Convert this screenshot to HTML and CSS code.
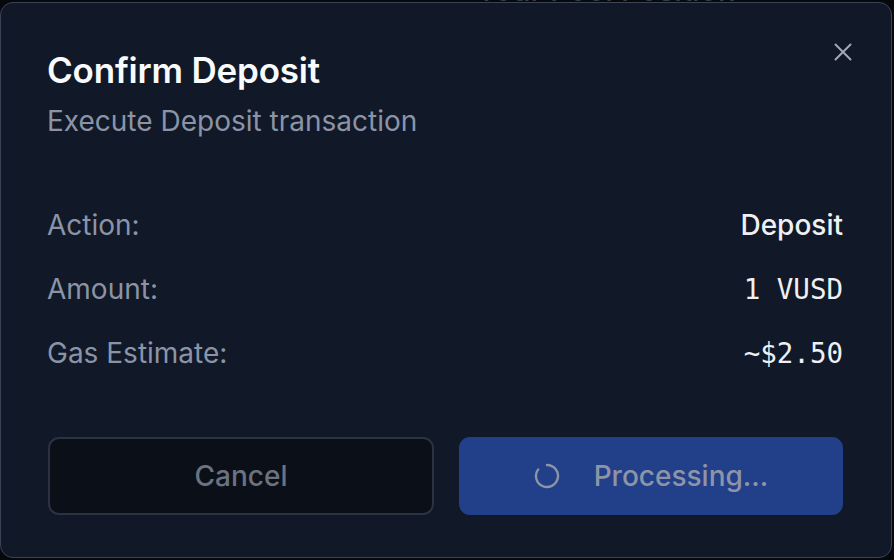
FILE: index.html
```html
<!DOCTYPE html>
<html lang="en">
<head>
<meta charset="utf-8">
<title>Confirm Deposit</title>
<link rel="stylesheet" href="styles.css">
</head>
<body>
<div class="page">
  <div class="page-heading">Your Pool Position</div>
</div>
<div class="dialog" role="dialog">
  <button class="close" aria-label="Close">
    <svg width="18" height="18" viewBox="0 0 18 18"><path d="M1.5 1.5 L16.5 16.5 M16.5 1.5 L1.5 16.5" stroke="currentColor" stroke-width="2" stroke-linecap="round"/></svg>
  </button>
  <div class="header">
    <h2 class="title">Confirm Deposit</h2>
    <p class="subtitle">Execute Deposit transaction</p>
  </div>
  <div class="rows">
    <div class="row"><span class="label">Action:</span><span class="value">Deposit</span></div>
    <div class="row"><span class="label">Amount:</span><span class="value mono">1 VUSD</span></div>
    <div class="row"><span class="label">Gas Estimate:</span><span class="value mono">~$2.50</span></div>
  </div>
  <div class="actions">
    <button class="btn btn-cancel">Cancel</button>
    <button class="btn btn-primary">
      <svg class="spinner" width="26" height="26" viewBox="0 0 26 26"><path d="M13 2 A11 11 0 1 1 4.2 6.4" fill="none" stroke="currentColor" stroke-width="2.4" stroke-linecap="round"/></svg>
      <span>Processing...</span>
    </button>
  </div>
</div>
</body>
</html>
```
FILE: styles.css
```css
* { box-sizing: border-box; }
html, body { margin: 0; padding: 0; }
body {
  width: 894px;
  height: 560px;
  overflow: hidden;
  background: #07080b;
  font-family: Inter, "Noto Sans", sans-serif;
  position: relative;
}
.page {
  display: flex;
  justify-content: flex-start;
  padding-left: 476px;
}
.page-heading {
  margin-top: -28px;
  font-size: 30px;
  line-height: 36px;
  font-weight: 500;
  color: #3a3e47;
}
.dialog {
  position: absolute;
  top: 2px;
  left: 0;
  width: 892px;
  height: 556px;
  background: #111827;
  border: 1px solid #3a4457;
  border-radius: 13px;
  padding: 46px 48px 0 46px;
  display: flex;
  flex-direction: column;
}
.close {
  position: absolute;
  top: 36px;
  right: 35px;
  width: 26px;
  height: 26px;
  padding: 4px;
  border: 0;
  background: transparent;
  color: #a3a8b3;
  display: flex;
  align-items: center;
  justify-content: center;
}
.header { display: flex; flex-direction: column; gap: 14px; flex-shrink: 0; }
.title {
  margin: 0;
  font-size: 35px;
  line-height: 42px;
  font-weight: 600;
  color: #f8fafc;
  letter-spacing: -0.2px;
}
.subtitle {
  margin: 0;
  font-size: 28px;
  line-height: 32px;
  color: #8b94a6;
}
.rows {
  margin-top: 72px;
  display: flex;
  flex-direction: column;
  gap: 32px;
  flex-shrink: 0;
}
.row {
  display: flex;
  justify-content: space-between;
  align-items: center;
  height: 32px;
  font-size: 28px;
  line-height: 32px;
}
.label { color: #8b94a6; }
.value { color: #eef0f4; font-weight: 500; }
.mono {
  font-family: "DejaVu Sans Mono", "Liberation Mono", monospace;
  font-weight: 400;
  font-size: 27.5px;
}
.actions {
  margin-top: 68px;
  margin-left: 1px;
  display: grid;
  grid-template-columns: 386px 1fr;
  gap: 25px;
  flex-shrink: 0;
}
.btn {
  height: 78px;
  border-radius: 11px;
  font-family: Inter, "Noto Sans", sans-serif;
  font-size: 28px;
  font-weight: 500;
  display: flex;
  align-items: center;
  justify-content: center;
}
.btn-cancel {
  background: #0b0f18;
  border: 2px solid #2b3242;
  color: #6c7280;
}
.btn-primary {
  background: #223f8a;
  border: 0;
  color: #8d94a8;
  gap: 34px;
  padding-left: 6px;
}
.spinner { color: #8d94a8; }
```
